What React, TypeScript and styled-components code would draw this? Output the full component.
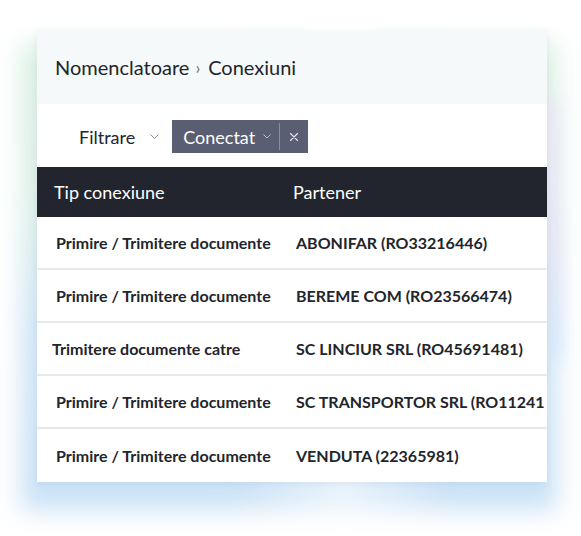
import styled, { createGlobalStyle } from "styled-components";

const GlobalStyle = createGlobalStyle`
  body {
    margin: 0;
    background: #ffffff;
    font-family: Lato, "Noto Sans", sans-serif;
  }
`;

const Page = styled.div`
  padding: 30px 34px 52px 37px;
`;

const Card = styled.div`
  position: relative;
  width: 510px;
  background: #ffffff;
  box-shadow: 0 2px 6px rgba(120, 140, 170, 0.12);

  &::before {
    content: "";
    position: absolute;
    inset: 14px -10px -28px -16px;
    z-index: -1;
    background:
      linear-gradient(90deg, rgba(255, 255, 255, 0) 40%, rgba(255, 255, 255, 0.6) 60%, rgba(255, 255, 255, 0) 80%),
      linear-gradient(180deg, #d9f0e3 0%, #dcefe6 30%, #cfe4f6 62%, #c9e2f6 100%);
    filter: blur(12px);
  }

  &::after {
    content: "";
    position: absolute;
    top: 70px;
    right: -12px;
    width: 30px;
    height: 260px;
    z-index: -1;
    background: linear-gradient(180deg, #ebe7f6 0%, #e4e3f6 60%, #d4e8f8 100%);
    filter: blur(10px);
  }
`;

const Inner = styled.div`
  position: relative;
  background: #ffffff;
  overflow: hidden;
`;

const TitleBar = styled.div`
  height: 74px;
  background: #f5f9fa;
  display: flex;
  align-items: center;
  padding-left: 18px;
  font-size: 20px;
  color: #22252b;
`;

const CrumbSep = styled.span`
  font-size: 17px;
  color: #6a6f78;
  margin: 1px 8px 0 6px;
`;

const FilterRow = styled.div`
  height: 63px;
  display: flex;
  align-items: flex-start;
  padding: 16px 0 0 42px;
  box-sizing: border-box;
`;

const FilterLabel = styled.div`
  display: flex;
  align-items: center;
  height: 33px;
  font-size: 18px;
  color: #22252b;
  gap: 15px;
  margin-right: 13px;
`;

const Tag = styled.div`
  display: flex;
  align-items: center;
  height: 33px;
  background: #5a5e72;
  color: #ffffff;
  font-size: 18px;
`;

const TagMain = styled.div`
  display: flex;
  align-items: center;
  gap: 8px;
  padding: 0 8px 0 11px;
  height: 100%;
`;

const TagClose = styled.div`
  display: flex;
  align-items: center;
  justify-content: center;
  width: 29px;
  height: 27px;
  border-left: 1px solid #8a8ea0;
  box-sizing: border-box;
`;

const Table = styled.div`
  width: 552px;
`;

const HeadRow = styled.div`
  display: grid;
  grid-template-columns: 239px 1fr;
  height: 50px;
  align-items: center;
  background: #22252d;
  color: #ffffff;
  font-size: 18px;
  padding-left: 17px;
`;

const Row = styled.div`
  display: grid;
  grid-template-columns: 240px 1fr;
  height: 53px;
  align-items: center;
  border-bottom: 2px solid #e8e9ea;
  box-sizing: border-box;
  padding-left: 19px;
  font-size: 16px;
  font-weight: 700;
  color: #22252b;
  white-space: nowrap;

  &:last-child {
    border-bottom: none;
  }
`;

const Cell = styled.div<{ $shift?: number }>`
  margin-left: ${({ $shift }) => $shift ?? 0}px;
  overflow: hidden;
`;

const Chevron = ({ size, color }: { size: number; color: string }) => (
  <svg width={size} height={size * 0.6} viewBox="0 0 10 6" fill="none">
    <path d="M1 1l4 4 4-4" stroke={color} strokeWidth="1" strokeLinecap="round" strokeLinejoin="round" />
  </svg>
);

const Cross = () => (
  <svg width="10" height="10" viewBox="0 0 10 10" fill="none">
    <path d="M1.5 1.5l7 7M8.5 1.5l-7 7" stroke="#e4e6ee" strokeWidth="1.1" strokeLinecap="round" />
  </svg>
);

const rows = [
  { type: "Primire / Trimitere documente", partner: "ABONIFAR (RO33216446)" },
  { type: "Primire / Trimitere documente", partner: "BEREME COM (RO23566474)" },
  { type: "Trimitere documente catre", partner: "SC LINCIUR SRL (RO45691481)", shift: -4 },
  { type: "Primire / Trimitere documente", partner: "SC TRANSPORTOR SRL (RO11241" },
  { type: "Primire / Trimitere documente", partner: "VENDUTA (22365981)" },
];

export default function App() {
  return (
    <>
      <GlobalStyle />
      <Page>
        <Card>
          <Inner>
            <TitleBar>
              <span>Nomenclatoare</span>
              <CrumbSep>›</CrumbSep>
              <span>Conexiuni</span>
            </TitleBar>
            <FilterRow>
              <FilterLabel>
                Filtrare
                <Chevron size={9} color="#7a7e88" />
              </FilterLabel>
              <Tag>
                <TagMain>
                  Conectat
                  <Chevron size={8} color="#d8dae4" />
                </TagMain>
                <TagClose>
                  <Cross />
                </TagClose>
              </Tag>
            </FilterRow>
            <Table>
              <HeadRow>
                <div>Tip conexiune</div>
                <div>Partener</div>
              </HeadRow>
              {rows.map((r, i) => (
                <Row key={i}>
                  <Cell $shift={r.shift}>{r.type}</Cell>
                  <Cell>{r.partner}</Cell>
                </Row>
              ))}
            </Table>
          </Inner>
        </Card>
      </Page>
    </>
  );
}
